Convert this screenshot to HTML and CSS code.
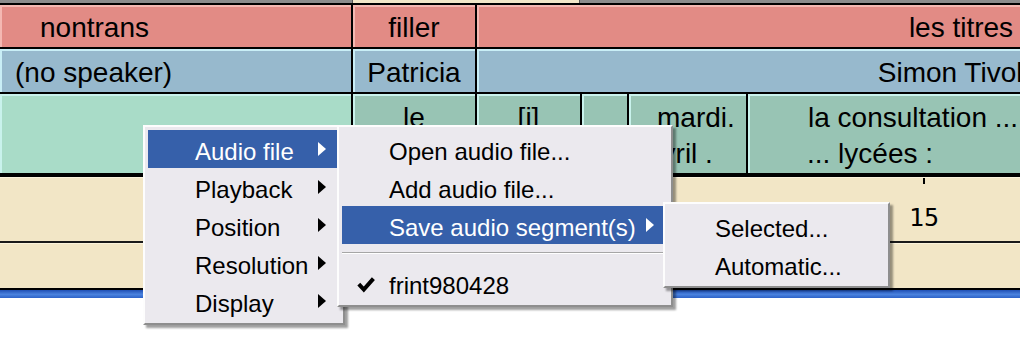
FILE: index.html
```html
<!DOCTYPE html>
<html lang="fr">
<head>
    <meta charset="UTF-8">
    <title>Transcriber</title>
    <link rel="stylesheet" href="styles.css">
</head>
<body>
    <div class="editor">
        <div class="topbar"><span class="topbar-sel"></span></div>

        <div class="row topic">
            <div class="cell first left">nontrans</div>
            <div class="cell narrow">filler</div>
            <div class="cell wide">les titres</div>
        </div>

        <div class="row speaker">
            <div class="cell first left">(no speaker)</div>
            <div class="cell narrow">Patricia</div>
            <div class="cell wide">Simon Tivolle</div>
        </div>

        <div class="row segs">
            <div class="cell first empty"></div>
            <div class="cell narrow">le</div>
            <div class="cell seg-i">[i]</div>
            <div class="cell seg-gap"></div>
            <div class="cell seg-date">
                <span class="line">mardi.</span>
                <span class="line line-2">avril .</span>
            </div>
            <div class="cell seg-text">
                <span class="line">la consultation ...</span>
                <span class="line line-3">... lycées :</span>
            </div>
        </div>

        <div class="axis">
            <div class="mark">
                <span class="tick"></span>
                <span class="label">15</span>
            </div>
        </div>
        <div class="wave"></div>
        <div class="scroll"></div>
    </div>

    <!-- context menus -->
    <ul class="menu menu-main">
        <li class="active">Audio file<span class="arrow"></span></li>
        <li>Playback<span class="arrow"></span></li>
        <li>Position<span class="arrow"></span></li>
        <li>Resolution<span class="arrow"></span></li>
        <li>Display<span class="arrow"></span></li>
    </ul>

    <ul class="menu menu-audio">
        <li>Open audio file...</li>
        <li>Add audio file...</li>
        <li class="active">Save audio segment(s)<span class="arrow"></span></li>
        <li class="sep"></li>
        <li class="checked">
            <svg class="check" width="18" height="17" viewBox="0 0 18 17">
                <path d="M1.8 8.2 L6.8 13.6 L16.4 2.6" fill="none" stroke="#000" stroke-width="4"/>
            </svg>frint980428
        </li>
    </ul>

    <ul class="menu menu-save">
        <li>Selected...</li>
        <li>Automatic...</li>
    </ul>
</body>
</html>
```

FILE: styles.css
```css
*{
    margin: 0;
    padding: 0;
    box-sizing: border-box;
}
body {
    width: 1020px;
    height: 355px;
    overflow: hidden;
    background: #fff;
    font-family: "Liberation Sans", Arial, sans-serif;
    color: #000;
}

.editor {
    width: 1020px;
    overflow: hidden;
}

.topbar {
    display: flex;
    height: 5px;
    background: #8c8c8c;
    border-bottom: 2px solid #000;
}
.topbar-sel {
    margin-left: 352px;
    width: 228px;
    background: #f2e6c8;
    border-left: 1px solid #555;
    border-right: 1px solid #555;
}

.row {
    display: flex;
    width: 1500px;
    font-size: 28px;
    border-bottom: 2px solid #000;
}

.cell {
    flex: none;
    border-left: 2px solid #000;
    text-align: center;
    white-space: nowrap;
    overflow: hidden;
}
.cell.first {
    width: 351px;
    border-left: none;
}
.cell.narrow {
    width: 124px;
}
.cell.wide {
    width: 970px;
}
.cell.left {
    text-align: left;
}

.topic {
    height: 44px;
}
.topic .cell {
    line-height: 42px;
    padding-top: 2px;
    background: #e28b85;
    box-shadow: inset 2px 2px 0 #f4b8b2;
}
.topic .cell.left {
    padding-left: 40px;
}

.speaker {
    height: 45px;
}
.speaker .cell {
    line-height: 43px;
    padding-top: 2px;
    background: #97b9cd;
    box-shadow: inset 2px 2px 0 #c9eef6;
}
.speaker .cell.left {
    padding-left: 15px;
}

.segs {
    height: 83px;
    border-bottom-width: 4px;
}
.segs .cell {
    line-height: 36px;
    padding-top: 6px;
    background: #98c4b4;
    box-shadow: inset 2px 2px 0 #c9f2ec;
}
.segs .cell.empty {
    background: #a9dcc8;
}
.seg-i {
    width: 105px;
}
.seg-gap {
    width: 47px;
}
.seg-date {
    width: 119px;
    text-align: left;
}
.seg-text {
    width: 700px;
    text-align: left;
}
.line {
    display: block;
}
.seg-date .line {
    padding-left: 28px;
}
.seg-date .line-2 {
    padding-left: 17px;
}
.seg-text .line {
    padding-left: 60px;
}
.seg-text .line-3 {
    padding-left: 59px;
}

.axis {
    height: 66px;
    background: #f2e6c6;
    border-top: 1px solid #fbf3dc;
    border-bottom: 2px solid #1a1a1a;
}
.mark {
    width: 36px;
    margin-left: 906px;
    display: flex;
    flex-direction: column;
    align-items: center;
}
.tick {
    width: 2px;
    height: 6px;
    background: #000;
}
.label {
    margin-top: 23px;
    font-family: "DejaVu Sans Mono", monospace;
    font-size: 25px;
    line-height: 22px;
}

.wave {
    height: 47px;
    background: #f2e6c6;
    border-top: 1px solid #fbf3dc;
    border-bottom: 2px solid #000;
}

.scroll {
    height: 8px;
    background: linear-gradient(#1f4fb4, #4a82de 55%, #2d63c8);
}

/* menus */
.menu {
    position: absolute;
    list-style: none;
    background: #ebe9ee;
    padding: 3px;
    border: 2px solid;
    border-color: #fdfdfd #8e8e8e #8e8e8e #fdfdfd;
    box-shadow: 3px 3px 2px rgba(0, 0, 0, 0.38);
    font-size: 24px;
}
.menu li {
    display: flex;
    align-items: center;
    height: 38px;
    padding: 6px 0 0 47px;
    line-height: 32px;
    white-space: nowrap;
}
.menu li.active {
    background: #3660aa;
    color: #fff;
}
.menu .arrow {
    margin-left: auto;
    margin-right: 14px;
    margin-top: -6px;
    width: 0;
    height: 0;
    border-top: 7px solid transparent;
    border-bottom: 7px solid transparent;
    border-left: 8px solid #000;
}
.menu li.active .arrow {
    border-left-color: #fff;
}
.menu li.sep {
    height: 0;
    padding: 0;
    margin: 8px 0 10px;
    border-top: 1px solid #a6a6a6;
    border-bottom: 1px solid #fff;
}
.menu li.checked {
    padding-left: 15px;
}
.check {
    margin-right: 14px;
    margin-top: -4px;
}

.menu-main {
    left: 143px;
    top: 125px;
    width: 202px;
}
.menu-audio {
    left: 337px;
    top: 125px;
    width: 336px;
}
.menu-save {
    left: 663px;
    top: 202px;
    width: 227px;
}
```
